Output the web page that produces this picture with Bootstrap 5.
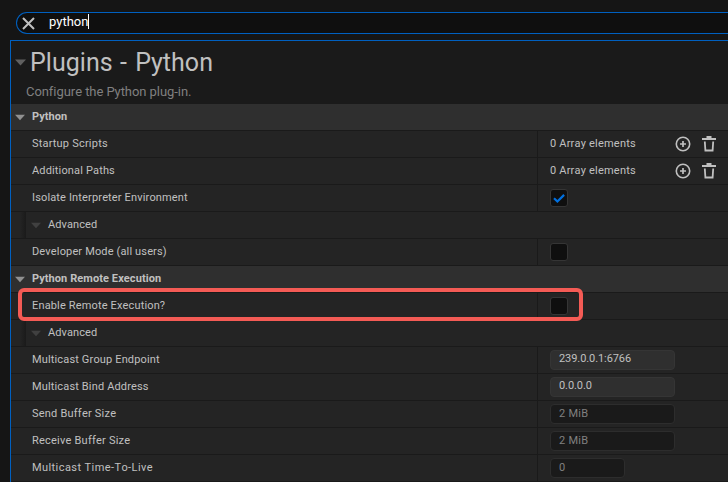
<!DOCTYPE html>
<html lang="en" data-bs-theme="dark">
<head>
<meta charset="utf-8">
<meta name="viewport" content="width=device-width, initial-scale=1">
<title>Plugins - Python</title>
<link href="https://cdn.jsdelivr.net/npm/bootstrap@5.3.0/dist/css/bootstrap.min.css" rel="stylesheet">
<style>
body{background:#151515;color:#c0c0c0;font:11px/16px Roboto,"Noto Sans",sans-serif;letter-spacing:.15px;font-kerning:none;height:482px}
svg{display:block;flex:none}
.search{margin:12px 0 0 16px;height:22px;border:1px solid #0060c0;border-right:0;border-radius:11px 0 0 11px;background:#0f0f0f;padding-left:5px}
.query{color:#fff;font-size:13px;letter-spacing:0;line-height:15px;margin:-3px 0 0 14px;border-right:1px solid #fff;height:15px}
.panel{margin:6px 0 0 10px;border:solid #0060c0;border-width:1px 0 0 1px;background:#242424;height:442px}
.head{height:63px;background:#1a1a1a}
.head svg{color:#606060;margin-top:5px}
.title{font-size:25px;line-height:30px;letter-spacing:.05px;margin:7px 0 0 4px;font-weight:400;color:#c0c0c0}
.title-dash{letter-spacing:1px}
.about{font-size:13px;line-height:16px;letter-spacing:-.06px;margin:0 0 4px 15px;color:#808080}
.line{height:27px;border-bottom:1px solid #1a1a1a}
.section-line{background:#2f2f2f;font-weight:700;padding-left:4px;letter-spacing:.08px}
.section-line svg{color:#909090;margin:0 7px 0 0}
.section-line span{padding-bottom:1px}
.name{width:527px;padding-left:21px;border-right:1px solid #1a1a1a;padding-bottom:1px}
.name.loose{letter-spacing:.22px}
.name.dashed{letter-spacing:.42px}
.value{padding-left:12px}
.count{width:125px;padding-bottom:1px;letter-spacing:.2px}
.bin{margin-left:11px}
.gutter{width:15px;background:linear-gradient(90deg,#242424 60%,#1a1a1a)}
.adv svg{margin:0 7px 0 5px;color:#404040}
.adv span{padding-bottom:1px;letter-spacing:.08px}
.box{width:18px;height:18px;border:1px solid #353535;border-radius:3px;background:#0f0f0f}
.field{width:125px;height:20px;border:1px solid #353535;border-radius:4px;background:#2f2f2f;padding:0 8px;line-height:16px;letter-spacing:-.08px}
.field.off{background:#1a1a1a;border-color:#2d2d2d;color:#808080;line-height:18px;letter-spacing:.25px}
.field.short{width:75px}
.outline-mark{left:18px;top:288px;width:565px;height:33px;border:4px solid #f45b55;border-radius:6px}
</style>
<script src="https://cdn.jsdelivr.net/npm/bootstrap@5.3.0/dist/js/bootstrap.bundle.min.js"></script>
</head>
<body class="overflow-hidden position-relative">
<svg class="d-none"><defs>
<symbol id="arrow" viewBox="0 0 11 7"><path d="M0 .5h11L5.5 6.5z" fill="currentColor"/></symbol>
<symbol id="plus" viewBox="0 0 16 16"><circle cx="8" cy="8" r="6.7" fill="none" stroke="#c0c0c0" stroke-width="1.6"/><path d="M8 5v6M5 8h6" stroke="#c0c0c0" stroke-width="1.7"/></symbol>
<symbol id="bin" viewBox="0 0 14 16"><path d="M0 3h14M4.5 1h5" stroke="#c0c0c0" stroke-width="2"/><path d="M2.8 5.5l.6 9h7.2l.6-9" fill="none" stroke="#c0c0c0" stroke-width="1.8"/></symbol>
</defs></svg>

<div class="search d-flex align-items-center">
  <svg width="13" height="13" viewBox="0 0 13 13"><path d="M1 1l11 11M12 1L1 12" stroke="#c0c0c0" stroke-width="2"/></svg>
  <span class="query">python</span>
</div>

<main class="panel">
  <header class="head d-flex flex-column justify-content-between">
    <div class="d-flex align-items-center ps-1">
      <svg width="11" height="7"><use href="#arrow"/></svg>
      <h1 class="title mb-0">Plugins<span class="title-dash"> - </span>Python</h1>
    </div>
    <p class="about">Configure the Python plug-in.</p>
  </header>

  <div class="line section-line d-flex align-items-center"><svg width="10" height="7"><use href="#arrow"/></svg><span>Python</span></div>
  <div class="line d-flex"><div class="name loose d-flex align-items-center">Startup Scripts</div><div class="value d-flex align-items-center"><span class="count">0 Array elements</span><svg width="16" height="16"><use href="#plus"/></svg><svg width="14" height="16" class="bin"><use href="#bin"/></svg></div></div>
  <div class="line d-flex"><div class="name d-flex align-items-center">Additional Paths</div><div class="value d-flex align-items-center"><span class="count">0 Array elements</span><svg width="16" height="16"><use href="#plus"/></svg><svg width="14" height="16" class="bin"><use href="#bin"/></svg></div></div>
  <div class="line d-flex"><div class="name d-flex align-items-center">Isolate Interpreter Environment</div><div class="value d-flex align-items-center"><div class="box"><svg width="16" height="16" viewBox="0 0 16 16"><path d="M3 8.2l3.4 3.3 6.7-6.6" fill="none" stroke="#0070e0" stroke-width="2.2"/></svg></div></div></div>
  <div class="line d-flex"><div class="gutter"></div><div class="d-flex align-items-center adv"><svg width="10" height="7"><use href="#arrow"/></svg><span>Advanced</span></div></div>
  <div class="line d-flex"><div class="name d-flex align-items-center">Developer Mode (all users)</div><div class="value d-flex align-items-center"><div class="box"></div></div></div>

  <div class="line section-line d-flex align-items-center"><svg width="10" height="7"><use href="#arrow"/></svg><span>Python Remote Execution</span></div>
  <div class="line d-flex"><div class="name d-flex align-items-center">Enable Remote Execution?</div><div class="value d-flex align-items-center"><div class="box"></div></div></div>
  <div class="line d-flex"><div class="gutter"></div><div class="d-flex align-items-center adv"><svg width="10" height="7"><use href="#arrow"/></svg><span>Advanced</span></div></div>
  <div class="line d-flex"><div class="name d-flex align-items-center">Multicast Group Endpoint</div><div class="value d-flex align-items-center"><div class="field">239.0.0.1:6766</div></div></div>
  <div class="line d-flex"><div class="name d-flex align-items-center">Multicast Bind Address</div><div class="value d-flex align-items-center"><div class="field">0.0.0.0</div></div></div>
  <div class="line d-flex"><div class="name loose d-flex align-items-center">Send Buffer Size</div><div class="value d-flex align-items-center"><div class="field off">2 MiB</div></div></div>
  <div class="line d-flex"><div class="name loose d-flex align-items-center">Receive Buffer Size</div><div class="value d-flex align-items-center"><div class="field off">2 MiB</div></div></div>
  <div class="line d-flex"><div class="name dashed d-flex align-items-center">Multicast Time-To-Live</div><div class="value d-flex align-items-center"><div class="field off short">0</div></div></div>
</main>
<div class="outline-mark position-absolute"></div>
</body>
</html>
